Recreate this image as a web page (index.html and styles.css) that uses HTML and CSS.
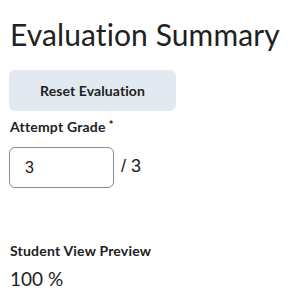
FILE: index.html
```html
<!DOCTYPE html>
<html lang="en">
<head>
    <meta charset="UTF-8">
    <meta name="viewport" content="width=device-width, initial-scale=1.0">
    <title>Evaluation Summary</title>
    <link rel="stylesheet" href="styles.css">
</head>
<body>
    <div class="summary">
        <h1>Evaluation Summary</h1>
        <button type="button" class="reset-btn">Reset Evaluation</button>
        <label class="field-label" for="attempt-grade">Attempt Grade<span class="required">*</span></label>
        <div class="grade-row">
            <input type="text" id="attempt-grade" class="grade-input" value="3">
            <span class="grade-max">/ 3</span>
        </div>
        <div class="preview">
            <div class="field-label">Student View Preview</div>
            <div class="preview-value">100 %</div>
        </div>
    </div>
</body>
</html>
```

FILE: styles.css
```css
body {
    margin: 0;
    padding: 0;
    background-color: #fff;
    color: #202122;
    font-family: Lato, "Open Sans", sans-serif;
}
.summary {
    padding: 16px 9px 0 9px;
}
h1 {
    margin: 0 0 18px 1px;
    font-size: 30px;
    font-weight: 400;
    line-height: 36px;
    letter-spacing: 0.1px;
}
.reset-btn {
    display: flex;
    align-items: center;
    justify-content: center;
    width: 167px;
    height: 41px;
    padding: 0 30px;
    background-color: #e3e9f1;
    color: #202122;
    border: none;
    border-radius: 6px;
    font-family: Lato, sans-serif;
    font-size: 14px;
    font-weight: 700;
    letter-spacing: 0.1px;
    cursor: pointer;
}
.field-label {
    display: block;
    font-size: 14px;
    font-weight: 700;
    line-height: 20px;
    letter-spacing: 0.2px;
    margin-left: 1px;
}
label.field-label {
    margin-top: 6px;
    margin-bottom: 10px;
}
.required {
    font-size: 11px;
    vertical-align: top;
    line-height: 16px;
    margin-left: 3px;
}
.grade-row {
    display: flex;
    align-items: center;
    gap: 7px;
}
.grade-input {
    width: 105px;
    height: 41px;
    box-sizing: border-box;
    padding: 0 15px;
    border: 1px solid #868c8f;
    border-radius: 6px;
    font-family: "Liberation Sans", Arial, sans-serif;
    font-size: 16px;
    color: #202122;
}
.grade-max {
    font-family: "Liberation Sans", Arial, sans-serif;
    font-size: 18px;
    padding-bottom: 2px;
}
.preview {
    margin-top: 53px;
}
.preview-value {
    font-size: 19px;
    line-height: 28px;
    margin-top: 4px;
    margin-left: 1px;
}
```
